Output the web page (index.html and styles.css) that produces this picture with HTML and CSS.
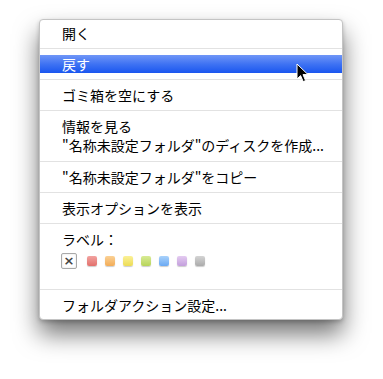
FILE: index.html
```html
<!DOCTYPE html>
<html lang="ja">
<head>
    <meta charset="UTF-8">
    <title>コンテキストメニュー</title>
    <link rel="stylesheet" href="styles.css">
</head>
<body>
    <div class="menu">
        <div class="item">開く</div>
        <div class="sep"></div>
        <div class="item selected">戻す</div>
        <div class="sep"></div>
        <div class="item">ゴミ箱を空にする</div>
        <div class="sep"></div>
        <div class="item double">情報を見る<br>"名称未設定フォルダ"のディスクを作成...</div>
        <div class="sep"></div>
        <div class="item">"名称未設定フォルダ"をコピー</div>
        <div class="sep"></div>
        <div class="item">表示オプションを表示</div>
        <div class="sep"></div>
        <div class="item">ラベル：</div>
        <div class="labels">
            <span class="none">×</span>
            <span class="dot red"></span>
            <span class="dot orange"></span>
            <span class="dot yellow"></span>
            <span class="dot green"></span>
            <span class="dot blue"></span>
            <span class="dot purple"></span>
            <span class="dot gray"></span>
        </div>
        <div class="sep"></div>
        <div class="item">フォルダアクション設定...</div>

        <!-- mouse pointer over the selected row -->
        <svg class="cursor" width="14" height="22" viewBox="0 0 14 22">
            <path d="M1 1 L1 16 L4.6 12.6 L7.2 18.6 L9.6 17.6 L7 11.6 L12 11.6 Z" fill="#000" stroke="#fff" stroke-width="1" stroke-linejoin="round"/>
        </svg>
    </div>
</body>
</html>
```

FILE: styles.css
```css
html, body {
    height: 100%;
}
body {
    margin: 0;
    padding: 19px 0 0 39px;
    box-sizing: border-box;
    background: #fff;
    font-family: "Noto Sans CJK JP", "DejaVu Sans", sans-serif;
    font-size: 14px;
    color: #000;
}
.menu {
    position: relative;
    box-sizing: border-box;
    width: 304px;
    height: 301px;
    padding: 4px 0;
    background: #fff;
    border: 1px solid #c4c4c4;
    border-radius: 4px;
    box-shadow: 0 14px 24px rgba(0, 0, 0, 0.55), 0 2px 4px rgba(0, 0, 0, 0.2);
}
.item {
    height: 18px;
    line-height: 18px;
    padding-left: 22px;
    white-space: nowrap;
}
.item.double {
    height: 38px;
    line-height: 19px;
}
.item.selected {
    color: #fff;
    background: linear-gradient(#7096f7, #3f73f3 50%, #1a56ef);
}
.sep {
    height: 1px;
    margin: 6px 0;
    background: #e2e2e2;
}
.labels {
    display: flex;
    align-items: center;
    height: 16px;
    padding: 5px 0 14px 21px;
}
.none {
    box-sizing: border-box;
    width: 16px;
    height: 16px;
    margin-right: 10px;
    border: 1px solid #a9a9a9;
    border-radius: 2px;
    box-shadow: inset 0 0 2px rgba(0, 0, 0, 0.15);
    font-family: "DejaVu Sans", sans-serif;
    font-size: 13px;
    font-weight: bold;
    line-height: 13px;
    text-align: center;
    color: #444;
}
.dot {
    width: 10px;
    height: 10px;
    margin-right: 8px;
    border-radius: 2px;
    box-shadow: 0 1px 1px rgba(0, 0, 0, 0.2);
}
.red { background: linear-gradient(#f2a3a0, #e2706c); }
.orange { background: linear-gradient(#fbd195, #f2ac57); }
.yellow { background: linear-gradient(#fbf197, #ecdc55); }
.green { background: linear-gradient(#d8eb95, #b7d45a); }
.blue { background: linear-gradient(#a9d2fb, #6aa9f3); }
.purple { background: linear-gradient(#e4cbf1, #c39fdc); }
.gray { background: linear-gradient(#d4d4d4, #ababab); }
.cursor {
    position: absolute;
    left: 256px;
    top: 43px;
}
```
